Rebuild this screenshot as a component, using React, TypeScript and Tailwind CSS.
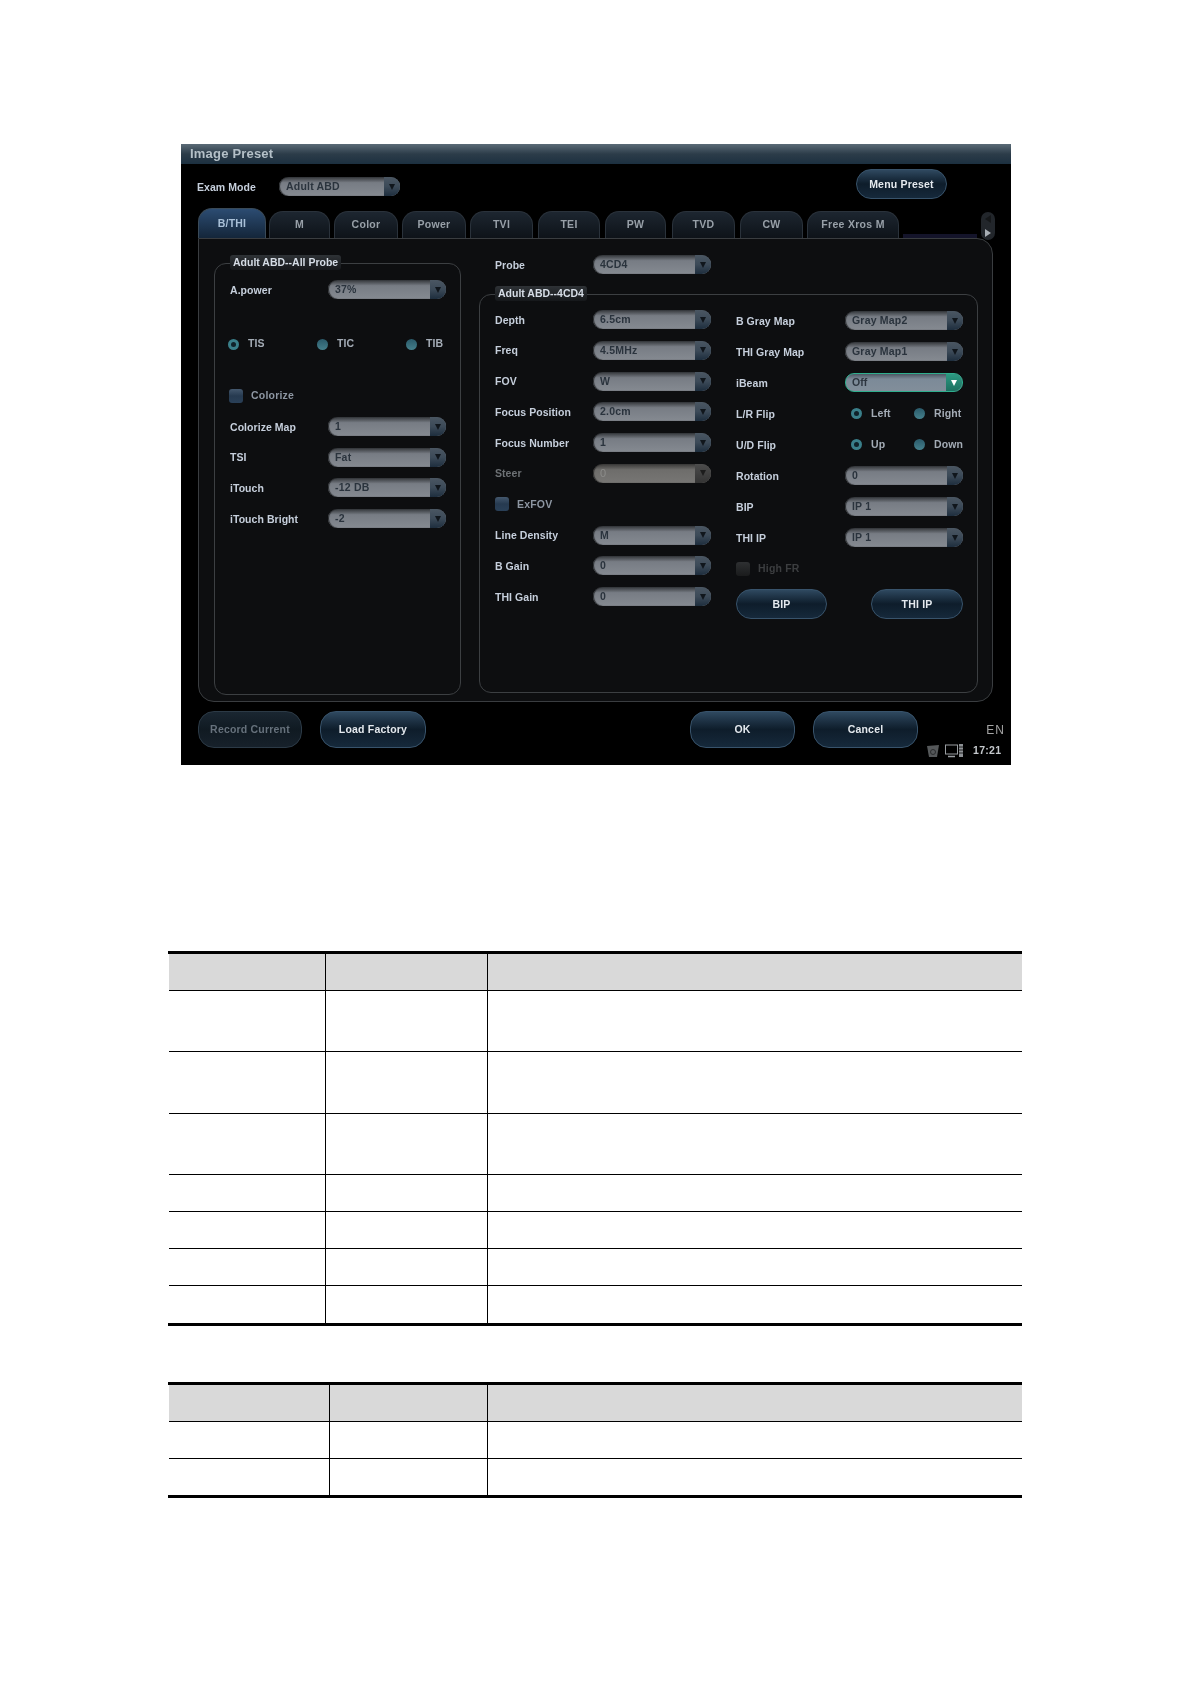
import type { ReactNode } from "react";

const tabs = [
  { name: "M", w: "w-[61px]", ml: "ml-[3px]" },
  { name: "Color", w: "w-[64px]", ml: "ml-[4px]" },
  { name: "Power", w: "w-[64px]", ml: "ml-[4px]" },
  { name: "TVI", w: "w-[63px]", ml: "ml-[4px]" },
  { name: "TEI", w: "w-[62px]", ml: "ml-[5px]" },
  { name: "PW", w: "w-[61px]", ml: "ml-[5px]" },
  { name: "TVD", w: "w-[63px]", ml: "ml-[6px]" },
  { name: "CW", w: "w-[63px]", ml: "ml-[5px]" },
  { name: "Free Xros M", w: "w-[92px]", ml: "ml-[4px]" },
];

const Dropdown = ({ value, state = "normal", width = "w-[118px]" }: { value: string; state?: "normal" | "disabled" | "focus"; width?: string }) => {
  if (state === "disabled") {
    return (
      <div className={`${width} flex h-[19px] shrink-0 overflow-hidden rounded-[9px] bg-gradient-to-b from-[#3a3938] via-[#6e6d6b] via-30% to-[#777674] shadow-[inset_1px_0_1px_#2a2a2a]`}>
        <span className="flex-1 pl-[7px] text-[11px] leading-[19px] text-[#8c8c8a]">{value}</span>
        <span className="flex w-[16px] items-center justify-center bg-gradient-to-b from-[#4c4c4c] to-[#343434]">
          <span className="h-0 w-0 border-x-[3px] border-t-[6px] border-x-transparent border-t-[#1c1c1c]" />
        </span>
      </div>
    );
  }
  if (state === "focus") {
    return (
      <div className={`${width} flex h-[19px] shrink-0 overflow-hidden rounded-[9px] border border-[#2fae8e] bg-gradient-to-b from-[#4c5864] via-[#7c8a98] via-30% to-[#828e9a]`}>
        <span className="flex-1 pl-[6px] text-[10.5px] font-bold leading-[17px] text-[#2d3640]">{value}</span>
        <span className="flex w-[16px] items-center justify-center bg-gradient-to-b from-[#2c9a82] to-[#1c7060]">
          <span className="h-0 w-0 border-x-[3px] border-t-[6px] border-x-transparent border-t-white" />
        </span>
      </div>
    );
  }
  return (
    <div className={`${width} flex h-[19px] shrink-0 overflow-hidden rounded-[9px] bg-gradient-to-b from-[#34373b] via-[#777c84] via-30% to-[#858a91] shadow-[inset_1px_0_1px_#25272a]`}>
      <span className="flex-1 pl-[7px] text-[10.5px] font-bold leading-[19px] tracking-[0.2px] text-[#2a333d]">{value}</span>
      <span className="flex w-[16px] items-center justify-center bg-gradient-to-b from-[#4a5662] via-[#3c4a58] to-[#1e2e3e]">
        <span className="h-0 w-0 border-x-[3px] border-t-[6px] border-x-transparent border-t-[#10161c]" />
      </span>
    </div>
  );
};

const Label = ({ children, width, muted }: { children: ReactNode; width: string; muted?: boolean }) => (
  <span className={`${width} shrink-0 pt-px text-[10.5px] font-bold leading-[19px] tracking-[0.05px] ${muted ? "text-[#6d7175]" : "text-[#c6cfdc]"}`}>{children}</span>
);

const Select = ({ label, value, width, state, muted }: { label: string; value: string; width: string; state?: "normal" | "disabled" | "focus"; muted?: boolean }) => (
  <div className="flex h-[19px] items-center">
    <Label width={width} muted={muted}>{label}</Label>
    <Dropdown value={value} state={state} />
  </div>
);

const Radio = ({ label, selected, width }: { label: string; selected?: boolean; width: string }) => (
  <div className={`${width} flex items-center`}>
    <span className={`flex h-[11px] w-[11px] shrink-0 items-center justify-center rounded-full ${selected ? "bg-[#3a7f8a]" : "bg-gradient-to-b from-[#2a5a6a] to-[#45808c]"}`}>
      {selected && <span className="h-[5px] w-[5px] rounded-full bg-[#10222a]" />}
    </span>
    <span className="ml-[9px] text-[10.5px] font-bold tracking-[0.1px] text-[#a4acb6]">{label}</span>
  </div>
);

const Check = ({ label, disabled }: { label: string; disabled?: boolean }) => (
  <div className="flex h-[19px] items-center">
    <span className={`h-[14px] w-[14px] rounded-[3px] bg-gradient-to-b ${disabled ? "from-[#2e3032] to-[#1a1b1c]" : "from-[#44586e] via-[#263a50] to-[#2a4058]"}`} />
    <span className={`ml-[8px] pt-px text-[10.5px] font-bold tracking-[0.2px] ${disabled ? "text-[#3c3e40]" : "text-[#8d96a2]"}`}>{label}</span>
  </div>
);

const Btn = ({ label, width, disabled }: { label: string; width: string; disabled?: boolean }) => (
  <div
    className={`${width} flex shrink-0 items-center justify-center rounded-[16px] border bg-gradient-to-b pt-px text-[10.5px] font-bold tracking-[0.2px] ${
      disabled
        ? "border-[#2c3a46] from-[#1a2631] via-[#101a22] to-[#17212b] text-[#66717c]"
        : "border-[#38536b] from-[#2f4960] via-[#0e1d2b] to-[#16293b] text-[#e4e9ee]"
    }`}
  >
    {label}
  </div>
);

const Legend = ({ children }: { children: ReactNode }) => (
  <span className="absolute left-[15px] top-[-9px] h-[15px] rounded-[3px] bg-gradient-to-b from-[#2e3236] to-[#16181b] px-[3px] text-[10.5px] font-bold leading-[15px] whitespace-nowrap text-[#d6dde6]">
    {children}
  </span>
);

const Tab = ({ name, w, ml }: { name: string; w: string; ml: string }) => (
  <div className={`${w} ${ml} flex h-[27px] items-center justify-center rounded-t-[14px] border border-b-0 border-[#2a323b] bg-gradient-to-b from-[#1d2630] to-[#0e1319] text-[10.5px] font-bold tracking-[0.3px] text-[#98a0a8]`}>
    {name}
  </div>
);

const TableRow = ({ height, cols, header, last }: { height: string; cols: string; header?: boolean; last?: boolean }) => (
  <div className={`${height} ${cols} ml-px grid ${last ? "" : "border-b border-black"} ${header ? "bg-[#d9d9d9]" : ""}`}>
    <div className="border-r border-black" />
    <div className="border-r border-black" />
    <div />
  </div>
);

export default function App() {
  return (
    <div className="min-h-[1684px] bg-white pt-[144px] font-['Liberation_Sans',sans-serif]">
      <div className="ml-[181px] h-[621px] w-[830px] bg-black blur-[0.3px]">
        <div className="h-[20px] bg-gradient-to-b from-[#5b6b77] via-[#2c3c49] to-[#1c3040] pl-[9px] text-[13px] font-bold leading-[20px] tracking-[0.2px] text-[#b4c0c8]">
          Image Preset
        </div>

        <div className="flex h-[44px]">
          <div className="ml-[16px] mt-[13px] flex h-[19px] items-center">
            <Label width="w-[82px]">Exam Mode</Label>
            <Dropdown value="Adult ABD" width="w-[121px]" />
          </div>
          <div className="ml-auto mr-[64px] mt-[5px] flex h-[30px]">
            <Btn label="Menu Preset" width="w-[91px]" />
          </div>
        </div>

        <div className="ml-[17px] flex h-[30px] items-end">
          <div className="flex h-[30px] w-[68px] items-center justify-center rounded-t-[14px] border border-b-0 border-[#3a4a58] bg-gradient-to-b from-[#2c4c72] to-[#14263a] text-[10.5px] font-bold tracking-[0.2px] text-[#a9c0d8]">
            B/THI
          </div>
          {tabs.map((t) => (
            <Tab key={t.name} {...t} />
          ))}
          <div className="ml-[4px] h-[4px] w-[74px] bg-[#14142a]" />
          <div className="z-10 -mb-[2px] ml-[4px] flex h-[28px] w-[14px] flex-col items-center justify-around rounded-[7px] bg-[#22262b]">
            <span className="h-0 w-0 border-y-[4px] border-r-[6px] border-y-transparent border-r-[#151719]" />
            <span className="h-0 w-0 border-y-[4px] border-l-[6px] border-y-transparent border-l-[#a8aeb4]" />
          </div>
        </div>

        <div className="ml-[17px] flex h-[464px] w-[795px] rounded-b-[16px] rounded-tr-[16px] border border-[#3a3d40] bg-[#0d0e10]">
          <div className="relative ml-[15px] mt-[24px] h-[432px] w-[247px] rounded-[12px] border border-[#3c3f42] pl-[15px] pt-[16px]">
            <Legend>Adult ABD--All Probe</Legend>
            <Select label="A.power" value="37%" width="w-[98px]" />
            <div className="-ml-[2px] mt-[36px] flex h-[18px]">
              <Radio label="TIS" selected width="w-[89px]" />
              <Radio label="TIC" width="w-[89px]" />
              <Radio label="TIB" width="w-[50px]" />
            </div>
            <div className="-ml-px mt-[33px]">
              <Check label="Colorize" />
            </div>
            <div className="mt-[12px] flex flex-col gap-[11.7px]">
              <Select label="Colorize Map" value="1" width="w-[98px]" />
              <Select label="TSI" value="Fat" width="w-[98px]" />
              <Select label="iTouch" value="-12 DB" width="w-[98px]" />
              <Select label="iTouch Bright" value="-2" width="w-[98px]" />
            </div>
          </div>

          <div className="ml-[18px] w-[499px]">
            <div className="ml-[16px] mt-[16px]">
              <Select label="Probe" value="4CD4" width="w-[98px]" />
            </div>
            <div className="relative mt-[20px] flex h-[399px] rounded-[12px] border border-[#3c3f42] pl-[15px] pt-[15px]">
              <Legend>Adult ABD--4CD4</Legend>
              <div className="flex w-[241px] flex-col gap-[11.8px]">
                <Select label="Depth" value="6.5cm" width="w-[98px]" />
                <Select label="Freq" value="4.5MHz" width="w-[98px]" />
                <Select label="FOV" value="W" width="w-[98px]" />
                <Select label="Focus Position" value="2.0cm" width="w-[98px]" />
                <Select label="Focus Number" value="1" width="w-[98px]" />
                <Select label="Steer" value="0" width="w-[98px]" state="disabled" muted />
                <Check label="ExFOV" />
                <Select label="Line Density" value="M" width="w-[98px]" />
                <Select label="B Gain" value="0" width="w-[98px]" />
                <Select label="THI Gain" value="0" width="w-[98px]" />
              </div>
              <div className="mt-px flex w-[227px] flex-col gap-[12px]">
                <Select label="B Gray Map" value="Gray Map2" width="w-[109px]" />
                <Select label="THI Gray Map" value="Gray Map1" width="w-[109px]" />
                <Select label="iBeam" value="Off" width="w-[109px]" state="focus" />
                <div className="flex h-[19px] items-center">
                  <Label width="w-[115px]">L/R Flip</Label>
                  <Radio label="Left" selected width="w-[63px]" />
                  <Radio label="Right" width="w-[48px]" />
                </div>
                <div className="flex h-[19px] items-center">
                  <Label width="w-[115px]">U/D Flip</Label>
                  <Radio label="Up" selected width="w-[63px]" />
                  <Radio label="Down" width="w-[48px]" />
                </div>
                <Select label="Rotation" value="0" width="w-[109px]" />
                <Select label="BIP" value="IP 1" width="w-[109px]" />
                <Select label="THI IP" value="IP 1" width="w-[109px]" />
                <Check label="High FR" disabled />
                <div className="-mt-px flex h-[30px] justify-between">
                  <Btn label="BIP" width="w-[91px]" />
                  <Btn label="THI IP" width="w-[92px]" />
                </div>
              </div>
            </div>
          </div>
        </div>

        <div className="flex h-[63px] pt-[9px]">
          <div className="ml-[17px] flex h-[37px]">
            <Btn label="Record Current" width="w-[104px]" disabled />
            <div className="ml-[18px] flex">
              <Btn label="Load Factory" width="w-[106px]" />
            </div>
            <div className="ml-[264px] flex">
              <Btn label="OK" width="w-[105px]" />
            </div>
            <div className="ml-[18px] flex">
              <Btn label="Cancel" width="w-[105px]" />
            </div>
          </div>
          <div className="ml-[8px] flex w-[85px] flex-col">
            <span className="mt-[12px] self-end pr-[6px] text-[12px] leading-[14px] tracking-[1px] text-[#a4a4a4]">EN</span>
            <div className="mt-[7px] flex h-[14px] items-center">
              <svg width="14" height="14" viewBox="0 0 14 14" aria-hidden="true">
                <path d="M1 2 L13 1 L11 13 L3 13 Z" fill="#55585a" />
                <circle cx="7" cy="8" r="2.5" fill="none" stroke="#2a2c2e" strokeWidth="1" />
              </svg>
              <svg className="ml-[5px]" width="18" height="14" viewBox="0 0 18 14" aria-hidden="true">
                <rect x="0.5" y="1" width="12" height="9" fill="none" stroke="#9a9ea2" strokeWidth="1" />
                <path d="M3 12.5 H10" stroke="#9a9ea2" strokeWidth="1.5" />
                <rect x="14" y="0" width="4" height="13" fill="#8d9195" />
                <path d="M14 3 H18 M14 6 H18 M14 9 H18" stroke="#222" strokeWidth="1" />
              </svg>
              <span className="ml-[10px] text-[10.5px] font-bold tracking-[0.3px] text-[#c4c8cc]">17:21</span>
            </div>
          </div>
        </div>
      </div>

      <div className="ml-[168px] mt-[186px] w-[854px] border-y-[3px] border-black">
        <TableRow height="h-[37px]" cols="grid-cols-[157px_162px_1fr]" header />
        <TableRow height="h-[61px]" cols="grid-cols-[157px_162px_1fr]" />
        <TableRow height="h-[62px]" cols="grid-cols-[157px_162px_1fr]" />
        <TableRow height="h-[61px]" cols="grid-cols-[157px_162px_1fr]" />
        <TableRow height="h-[37px]" cols="grid-cols-[157px_162px_1fr]" />
        <TableRow height="h-[37px]" cols="grid-cols-[157px_162px_1fr]" />
        <TableRow height="h-[37px]" cols="grid-cols-[157px_162px_1fr]" />
        <TableRow height="h-[37px]" cols="grid-cols-[157px_162px_1fr]" last />
      </div>

      <div className="ml-[168px] mt-[56px] w-[854px] border-y-[3px] border-black">
        <TableRow height="h-[37px]" cols="grid-cols-[161px_158px_1fr]" header />
        <TableRow height="h-[37px]" cols="grid-cols-[161px_158px_1fr]" />
        <TableRow height="h-[36px]" cols="grid-cols-[161px_158px_1fr]" last />
      </div>
    </div>
  );
}
